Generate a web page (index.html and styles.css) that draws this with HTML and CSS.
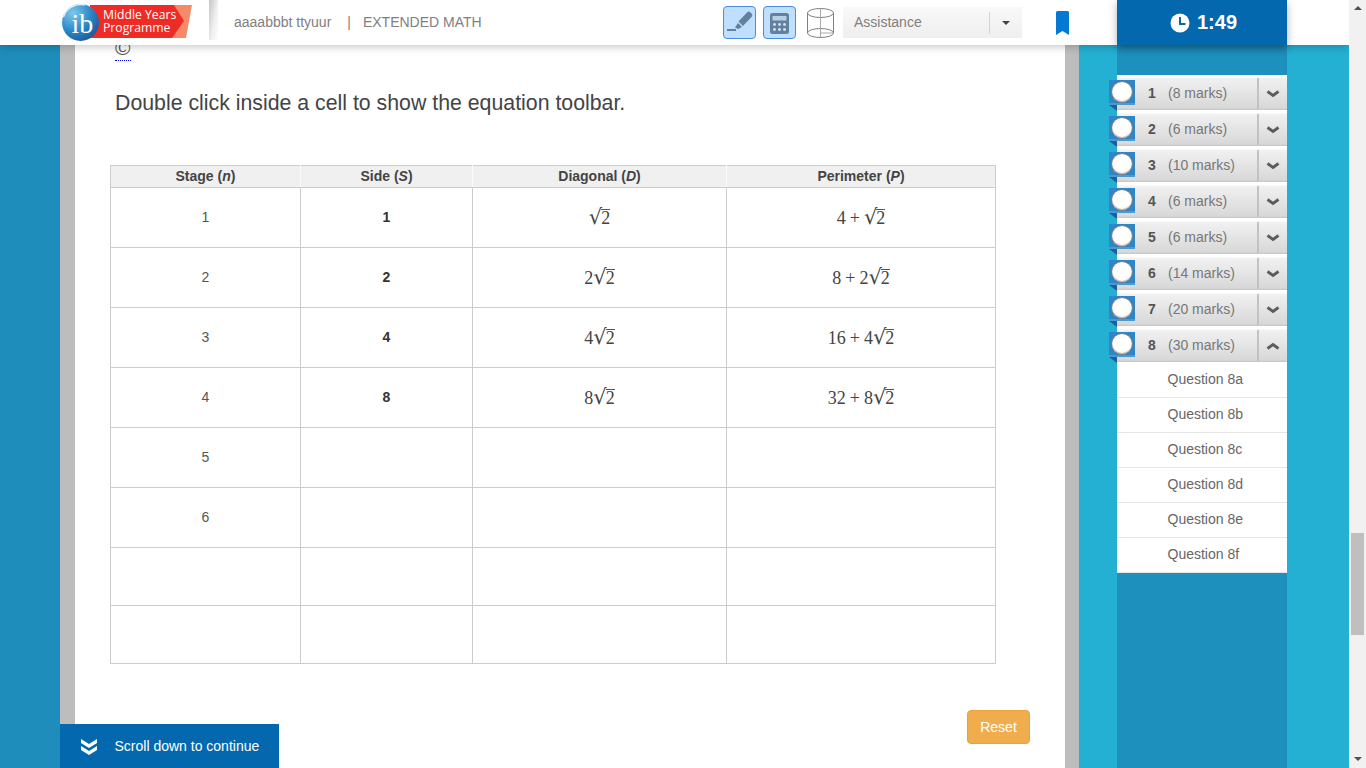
FILE: index.html
```html
<!DOCTYPE html>
<html lang="en">
<head>
<meta charset="utf-8">
<title>Extended Math</title>
<link rel="stylesheet" href="styles.css">
</head>
<body>
<div class="app">
  <div class="window">
    <header class="topbar">
      <svg class="logo" width="135" height="45" viewBox="0 0 135 45">
        <defs>
          <radialGradient id="ball" cx="0.3" cy="0.25" r="0.9">
            <stop offset="0" stop-color="#7cc8ee"/>
            <stop offset="0.55" stop-color="#2a86c4"/>
            <stop offset="1" stop-color="#174f94"/>
          </radialGradient>
        </defs>
        <polygon points="110,5 132,5 126,38 112,38" fill="#f58a68"/>
        <polygon points="30,5 114,5 124,21 112,38 30,38" fill="#ee2b24"/>
        <circle cx="20.500" cy="22.500" r="18.500" fill="url(#ball)"/>
        <path d="M3.500 17 A18 18 0 0 1 25 5" fill="none" stroke="#d8eef9" stroke-width="1.500"/>
        <text class="logo-ib" x="11.500" y="33">ib</text>
        <text class="logo-text" x="43" y="19">Middle Years</text>
        <text class="logo-text" x="43" y="32">Programme</text>
      </svg>
      <div class="logo-edge"></div>
      <div class="crumbs"><span>aaaabbbt ttyuur</span><span class="sep">|</span><span>EXTENDED MATH</span></div>
      <div class="tools">
        <button class="tool" type="button" aria-label="Highlighter">
          <svg width="31" height="31" viewBox="0 0 31 31">
            <path d="M14.500 14.500 L23 5.500 Q24.500 4 26 5 L28 7 Q29 8.500 27.500 10 L19 19 Z" fill="#62809f"/>
            <path d="M14 16 L18 20 L14 22 L11 20.500 Z" fill="#62809f"/>
            <rect x="3" y="22" width="9" height="2" fill="#62809f"/>
          </svg>
        </button>
        <button class="tool" type="button" aria-label="Calculator">
          <svg width="31" height="31" viewBox="0 0 31 31">
            <rect x="6" y="6" width="19" height="21" rx="2.500" fill="#62809f"/>
            <rect x="8.500" y="9" width="14" height="4.500" fill="#b9cfe4"/>
            <g fill="#d5e3f0">
              <circle cx="10.500" cy="17.500" r="1.400"/><circle cx="15.500" cy="17.500" r="1.400"/><circle cx="20.500" cy="17.500" r="1.400"/>
              <circle cx="10.500" cy="22.500" r="1.400"/><circle cx="15.500" cy="22.500" r="1.400"/><circle cx="20.500" cy="22.500" r="1.400"/>
            </g>
          </svg>
        </button>
        <svg class="cylinder" width="29" height="32" viewBox="0 0 29 32">
          <ellipse cx="14.500" cy="6" rx="13" ry="4.500" fill="none" stroke="#808080"/>
          <ellipse cx="14.500" cy="26" rx="13" ry="4.500" fill="none" stroke="#808080"/>
          <path d="M1.500 6 V26 M27.500 6 V26" stroke="#808080" fill="none"/>
          <path d="M14.500 2 V30 M14.500 26 H27" stroke="#aaa" fill="none"/>
        </svg>
      </div>
      <div class="assist">
        <span class="assist-label">Assistance</span>
        <span class="assist-caret"><i class="caret"></i></span>
      </div>
      <svg class="bookmark" width="13" height="24" viewBox="0 0 13 24">
        <path d="M0 1.500 Q0 0 1.500 0 H11.500 Q13 0 13 1.500 V24 L6.500 20 L0 24 Z" fill="#0578d4"/>
      </svg>
      <div class="timer">
        <svg width="20" height="20" viewBox="0 0 20 20">
          <circle cx="10" cy="10" r="9.500" fill="#fff"/>
          <path d="M10 4 V11 H15.500" fill="none" stroke="#0368ae" stroke-width="2"/>
        </svg>
        <span>1:49</span>
      </div>
    </header>
    <div class="stage">
      <div class="gutter"></div>
      <div class="sheet-edge"></div>
      <main class="sheet">
        <div class="part-label">©</div>
        <p class="instruction">Double click inside a cell to show the equation toolbar.</p>
        <table class="grid">
          <colgroup>
            <col class="c1"><col class="c2"><col class="c3"><col class="c4">
          </colgroup>
          <thead>
            <tr><th>Stage (<em>n</em>)</th><th>Side (<em>S</em>)</th><th>Diagonal (<em>D</em>)</th><th>Perimeter (<em>P</em>)</th></tr>
          </thead>
          <tbody>
            <tr>
              <td>1</td><td class="bold">1</td>
              <td class="math"><span class="rad">√</span><span class="vinc">2</span></td>
              <td class="math">4<span class="op">+</span><span class="rad">√</span><span class="vinc">2</span></td>
            </tr>
            <tr>
              <td>2</td><td class="bold">2</td>
              <td class="math">2<span class="rad">√</span><span class="vinc">2</span></td>
              <td class="math">8<span class="op">+</span>2<span class="rad">√</span><span class="vinc">2</span></td>
            </tr>
            <tr>
              <td>3</td><td class="bold">4</td>
              <td class="math">4<span class="rad">√</span><span class="vinc">2</span></td>
              <td class="math">16<span class="op">+</span>4<span class="rad">√</span><span class="vinc">2</span></td>
            </tr>
            <tr>
              <td>4</td><td class="bold">8</td>
              <td class="math">8<span class="rad">√</span><span class="vinc">2</span></td>
              <td class="math">32<span class="op">+</span>8<span class="rad">√</span><span class="vinc">2</span></td>
            </tr>
            <tr><td>5</td><td></td><td></td><td></td></tr>
            <tr><td>6</td><td></td><td></td><td></td></tr>
            <tr class="short"><td></td><td></td><td></td><td></td></tr>
            <tr class="short"><td></td><td></td><td></td><td></td></tr>
          </tbody>
        </table>
        <div class="actions"><button class="reset" type="button">Reset</button></div>
      </main>
      <div class="sheet-edge right"></div>
      <div class="margin-left"></div>
      <nav class="nav">
        <div class="q"><span class="tag"><i class="dot"></i></span><b>1</b><span class="marks">(8 marks)</span><span class="toggle"><svg width="14" height="8" viewBox="0 0 14 8"><path d="M1.500 1.500 L7 5.500 L12.500 1.500" class="chev"/></svg></span></div>
        <div class="q"><span class="tag"><i class="dot"></i></span><b>2</b><span class="marks">(6 marks)</span><span class="toggle"><svg width="14" height="8" viewBox="0 0 14 8"><path d="M1.500 1.500 L7 5.500 L12.500 1.500" class="chev"/></svg></span></div>
        <div class="q"><span class="tag"><i class="dot"></i></span><b>3</b><span class="marks">(10 marks)</span><span class="toggle"><svg width="14" height="8" viewBox="0 0 14 8"><path d="M1.500 1.500 L7 5.500 L12.500 1.500" class="chev"/></svg></span></div>
        <div class="q"><span class="tag"><i class="dot"></i></span><b>4</b><span class="marks">(6 marks)</span><span class="toggle"><svg width="14" height="8" viewBox="0 0 14 8"><path d="M1.500 1.500 L7 5.500 L12.500 1.500" class="chev"/></svg></span></div>
        <div class="q"><span class="tag"><i class="dot"></i></span><b>5</b><span class="marks">(6 marks)</span><span class="toggle"><svg width="14" height="8" viewBox="0 0 14 8"><path d="M1.500 1.500 L7 5.500 L12.500 1.500" class="chev"/></svg></span></div>
        <div class="q"><span class="tag"><i class="dot"></i></span><b>6</b><span class="marks">(14 marks)</span><span class="toggle"><svg width="14" height="8" viewBox="0 0 14 8"><path d="M1.500 1.500 L7 5.500 L12.500 1.500" class="chev"/></svg></span></div>
        <div class="q"><span class="tag"><i class="dot"></i></span><b>7</b><span class="marks">(20 marks)</span><span class="toggle"><svg width="14" height="8" viewBox="0 0 14 8"><path d="M1.500 1.500 L7 5.500 L12.500 1.500" class="chev"/></svg></span></div>
        <div class="q"><span class="tag"><i class="dot"></i></span><b>8</b><span class="marks">(30 marks)</span><span class="toggle"><svg width="14" height="8" viewBox="0 0 14 8"><path d="M1.500 6.500 L7 2.500 L12.500 6.500" class="chev"/></svg></span></div>
        <ul class="subs">
          <li>Question 8a</li>
          <li>Question 8b</li>
          <li>Question 8c</li>
          <li>Question 8d</li>
          <li>Question 8e</li>
          <li>Question 8f</li>
        </ul>
      </nav>
      <div class="margin-right"></div>
    </div>
    <div class="scroll-hint">
      <svg width="18" height="17" viewBox="0 0 18 17">
        <path d="M1 1 L9 6 L17 1 V5 L9 10 L1 5 Z M1 8 L9 13 L17 8 V12 L9 17 L1 12 Z" fill="#fff"/>
      </svg>
      <span>Scroll down to continue</span>
    </div>
  </div>
  <aside class="scrollbar">
    <i class="arrow up"></i>
    <div class="thumb"></div>
    <i class="arrow down"></i>
  </aside>
</div>
</body>
</html>
```
FILE: styles.css
```css
* { box-sizing: border-box; }
html, body { margin: 0; height: 100%; overflow: hidden; }
body { font-family: "Liberation Sans", Arial, sans-serif; font-size: 14px; color: #444; }

.app { display: flex; width: 1366px; height: 768px; }
.window { position: relative; width: 1349px; height: 768px; display: flex; flex-direction: column; overflow: hidden; }

/* header */
.topbar { position: relative; z-index: 3; flex: none; height: 45px; background: #fff; display: flex; align-items: center; box-shadow: 0 2px 8px rgba(0,0,0,.22); padding-left: 60px; }
.logo { flex: none; display: block; }
.logo-ib { font-family: "Liberation Serif", serif; font-size: 28px; fill: #fff; }
.logo-text { font-family: "Open Sans", sans-serif; font-size: 12.2px; fill: #fff; }
.logo-edge { flex: none; align-self: flex-start; width: 9px; height: 40px; margin-left: 14px; background: linear-gradient(100deg, #c4c4c4 0%, #eee 55%, #fff 100%); }
.crumbs { flex: none; width: 489px; margin-left: 16px; margin-top: -2px; color: #808080; font-size: 14px; display: flex; }
.crumbs .sep { margin: 0 12px 0 16px; }
.tools { flex: none; display: flex; align-items: center; width: 120px; }
.tool { width: 33px; height: 33px; padding: 0; margin-right: 7px; background: #c0dffe; border: 1px solid #4a8de0; border-radius: 4px; display: flex; align-items: center; justify-content: center; }
.cylinder { display: block; margin-left: 3px; }
.assist { flex: none; width: 179px; height: 31px; background: linear-gradient(#f9f9f9, #eeeeee); display: flex; align-items: center; color: #808080; }
.assist-label { flex: none; width: 146px; padding-left: 11px; margin-top: -2px; }
.assist-caret { flex: 1; height: 22px; border-left: 1px solid #d4d4d4; display: flex; align-items: center; justify-content: center; }
.caret { width: 0; height: 0; border: 4px solid transparent; border-top-color: #444; border-bottom: 0; }
.bookmark { flex: none; display: block; margin-left: 34px; }
.timer { flex: none; margin-left: 48px; width: 170px; height: 45px; background: #0368ae; color: #fff; font-size: 20px; font-weight: 700; display: flex; align-items: center; justify-content: center; gap: 7px; box-shadow: 0 3px 8px rgba(0,0,0,.3); padding-left: 3px; }
.timer svg { display: block; }

/* page columns */
.stage { flex: 1; min-height: 0; display: flex; }
.gutter { flex: none; width: 60px; background: #1e8dbc; }
.sheet-edge { flex: none; width: 15px; background: #bdbdbd; }
.sheet-edge.right { width: 14px; }
.margin-left { flex: none; width: 38px; background: #24b0d3; }
.margin-right { flex: none; width: 62px; background: #24b0d3; }

/* sheet */
.sheet { flex: none; width: 990px; background: #fff; padding: 0 35px; overflow: hidden; }
.part-label { width: 16px; height: 16px; margin: 0 0 0 5px; line-height: 6px; font-size: 21px; color: #555; border-bottom: 1px dotted #00f; }
.instruction { margin: 30px 0 0 5px; font-size: 21.3px; line-height: 24px; color: #444; }
.grid { margin-top: 50px; width: 885px; border-collapse: collapse; table-layout: fixed; }
.c1 { width: 190px; }
.c2 { width: 172px; }
.c3 { width: 254px; }
.c4 { width: 269px; }
.grid th, .grid td { border: 1px solid #ccc; text-align: center; padding: 0 0 2px; }
.grid th { height: 22px; background: #f0f0f0; font-size: 14px; font-weight: 700; color: #444; border-left-color: #fafafa; border-right-color: #fafafa; }
.grid th:first-child { border-left-color: #ccc; }
.grid th:last-child { border-right-color: #ccc; }
.grid td { height: 60px; font-size: 14px; color: #555; }
.grid tr.short td { height: 58px; }
.grid td.bold { font-weight: 700; color: #333; }
.grid td.math { font-family: "Liberation Serif", serif; font-size: 18px; color: #444; padding: 0; }
.rad { font-family: "DejaVu Sans", sans-serif; font-size: 21px; line-height: 20px; }
.vinc { display: inline-block; border-top: 1px solid #555; line-height: 17px; margin-left: -1px; }
.op { margin: 0 4px; }
.actions { display: flex; justify-content: flex-end; margin-top: 46px; }
.reset { width: 63px; height: 34px; padding: 0; background: #f0ad4e; border: 1px solid #eea236; border-radius: 4px; color: #fff; font: 14px "Liberation Sans", Arial, sans-serif; }

/* question nav */
.nav { flex: none; width: 170px; background: #1e90bd; padding-top: 30px; }
.q { position: relative; height: 36px; display: flex; align-items: center; background: linear-gradient(#fff 0, #fff 2px, #f1f1f1 3px, #d8d8d8 33px, #c4c4c4 35px, #fff 35px); color: #777; }
.q b { width: 20px; margin-left: 31px; color: #555; }
.marks { flex: none; width: 89px; }
.toggle { flex: 1; align-self: stretch; margin: 3px 0 2px; border-left: 2px solid #c2c2c2; display: flex; align-items: center; justify-content: center; }
.toggle svg { display: block; }
.chev { fill: none; stroke: #5c5c5c; stroke-width: 2.8; }
.tag { position: absolute; left: -8px; top: 5px; width: 26px; height: 25px; background: #2c86c8; border-bottom: 2px solid #4a9ad4; display: flex; align-items: center; justify-content: flex-start; }
.tag::after { content: ""; position: absolute; left: 0; top: 25px; border-top: 6px solid #1e5f9a; border-left: 8px solid transparent; }
.dot { width: 22px; height: 22px; margin-left: 2px; background: #fff; border: 1px solid #777; border-radius: 50%; box-shadow: inset 0 -1px 1px #bbb; }
.subs { list-style: none; margin: 0; padding: 0; background: #fff; color: #666; }
.subs li { height: 35px; line-height: 33px; padding-left: 50.5px; border-bottom: 1px solid #e6e6e6; }

/* scroll hint */
.scroll-hint { position: absolute; left: 60px; bottom: 0; z-index: 2; width: 219px; height: 44px; background: #0368ae; color: #fff; display: flex; align-items: center; padding-left: 20px; gap: 16.5px; }
.scroll-hint svg { display: block; flex: none; }

/* scrollbar */
.scrollbar { flex: none; width: 17px; height: 768px; background: #f1f1f1; display: flex; flex-direction: column; align-items: center; }
.arrow { flex: none; width: 0; height: 0; border-left: 4px solid transparent; border-right: 4px solid transparent; }
.arrow.up { margin-top: 6px; border-bottom: 4px solid #505050; }
.arrow.down { margin-top: 122px; border-top: 4px solid #505050; }
.thumb { flex: none; width: 13px; height: 102px; margin-top: 523px; background: #bfbfbf; }
```
